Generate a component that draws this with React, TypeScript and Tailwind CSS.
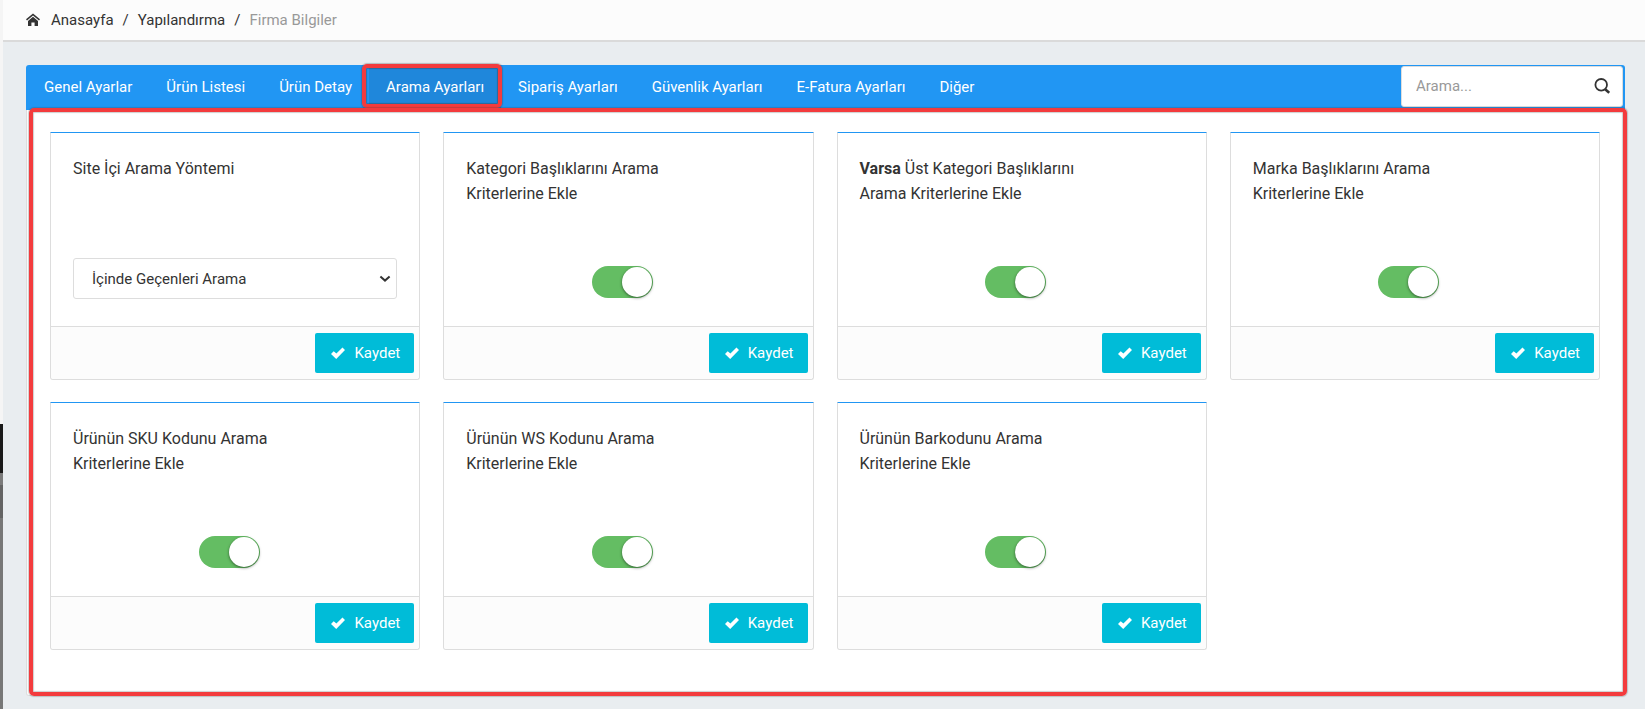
import { useState } from "react";
import type { ReactNode } from "react";

type Setting = {
  id: string;
  title: ReactNode;
  kind: "select" | "toggle";
};

const tabs = [
  "Genel Ayarlar",
  "Ürün Listesi",
  "Ürün Detay",
  "Arama Ayarları",
  "Sipariş Ayarları",
  "Güvenlik Ayarları",
  "E-Fatura Ayarları",
  "Diğer",
];

const settings: Setting[] = [
  { id: "method", title: "Site İçi Arama Yöntemi", kind: "select" },
  { id: "category", title: "Kategori Başlıklarını Arama Kriterlerine Ekle", kind: "toggle" },
  {
    id: "parent-category",
    title: (
      <>
        <b className="font-bold">Varsa</b> Üst Kategori Başlıklarını Arama Kriterlerine Ekle
      </>
    ),
    kind: "toggle",
  },
  { id: "brand", title: "Marka Başlıklarını Arama Kriterlerine Ekle", kind: "toggle" },
  { id: "sku", title: "Ürünün SKU Kodunu Arama Kriterlerine Ekle", kind: "toggle" },
  { id: "ws", title: "Ürünün WS Kodunu Arama Kriterlerine Ekle", kind: "toggle" },
  { id: "barcode", title: "Ürünün Barkodunu Arama Kriterlerine Ekle", kind: "toggle" },
];

function HomeIcon() {
  return (
    <svg viewBox="0 0 14 14" className="size-[14px]" fill="currentColor" aria-hidden="true">
      <path d="M7 0.4 0 6.2l1 1.2L7 2.5l6 4.9 1-1.2z" />
      <path d="M7 3.8 2 7.9V13h3.4V9.4h3.2V13H12V7.9z" />
    </svg>
  );
}

function CheckIcon() {
  return (
    <svg viewBox="0 0 14 14" className="size-[14px]" fill="currentColor" aria-hidden="true">
      <path d="M11.5 1.4 5.4 7.6 2.7 5.3 0 8l5.2 5L14 4z" />
    </svg>
  );
}

function SearchIcon() {
  return (
    <svg viewBox="0 0 16 16" className="size-4" fill="none" stroke="currentColor" aria-hidden="true">
      <circle cx="7.2" cy="6.8" r="5.8" strokeWidth="1.8" />
      <path d="m11.2 11.2 4 3.6" strokeWidth="2.6" />
    </svg>
  );
}

function ChevronIcon() {
  return (
    <svg
      viewBox="0 0 12 8"
      className="pointer-events-none absolute right-[6px] h-2 w-3"
      fill="none"
      stroke="currentColor"
      strokeWidth="2"
      aria-hidden="true"
    >
      <path d="m1.4 1.6 4.6 4 4.6-4" />
    </svg>
  );
}

function Toggle({ id }: { id: string }) {
  const [on, setOn] = useState(true);
  return (
    <input
      id={id}
      type="checkbox"
      role="switch"
      checked={on}
      onChange={(e) => setOn(e.target.checked)}
      className="flex h-8 w-[61px] cursor-pointer appearance-none items-center rounded-full bg-[#dfdfdf] px-px before:block before:size-[30px] before:rounded-full before:bg-white before:shadow-[0_1px_3px_rgba(0,0,0,0.5)] checked:justify-end checked:bg-[#64bd63]"
    />
  );
}

function SettingCard({ setting }: { setting: Setting }) {
  return (
    <section className="flex flex-col rounded-b-[3px] border border-[#ddd] border-t-[#2196f3] bg-white">
      <div className="flex h-[193px] flex-col justify-between px-[22px] pt-[23px] pb-[27px]">
        <label htmlFor={setting.id} className="w-3/4 text-base leading-[25px]">
          {setting.title}
        </label>
        {setting.kind === "select" ? (
          <div className="relative flex items-center">
            <select
              id={setting.id}
              className="h-[41px] w-full appearance-none rounded-[3px] border border-[#ddd] bg-white px-[18px] text-[15px]"
            >
              <option>İçinde Geçenleri Arama</option>
            </select>
            <ChevronIcon />
          </div>
        ) : (
          <div className="flex justify-center pr-3 pb-px">
            <Toggle id={setting.id} />
          </div>
        )}
      </div>
      <div className="flex justify-end rounded-b-[3px] border-t border-[#ddd] bg-[#fcfcfc] px-[5px] py-[6px]">
        <button
          type="button"
          className="flex h-10 items-center gap-[9px] rounded-[2px] bg-[#00bcd8] pr-[14px] pl-4 text-[15px] text-white"
        >
          <CheckIcon />
          Kaydet
        </button>
      </div>
    </section>
  );
}

export default function App() {
  return (
    <div className="flex min-h-screen bg-[#e9edf0] font-['Roboto',sans-serif] text-[15px] leading-5 text-[#333]">
      <div className="flex w-[3px] shrink-0 flex-col bg-[#777]" aria-hidden="true">
        <div className="h-[424px] bg-[#f5f5f5]" />
        <div className="h-[49px] bg-[#191919]" />
        <div className="h-3 bg-[#7b7b7b]" />
        <div className="h-[33px] bg-[#646464]" />
      </div>

      <div className="min-w-0 flex-1">
        <header className="border-b-2 border-[#dadada] bg-[#fcfcfc]">
          <nav aria-label="Sayfa yolu" className="flex h-10 items-center gap-[9px] px-[23px]">
            <a href="#" className="flex items-center gap-[11px]">
              <HomeIcon />
              Anasayfa
            </a>
            <span>/</span>
            <a href="#">Yapılandırma</a>
            <span>/</span>
            <span className="text-[#999]">Firma Bilgiler</span>
          </nav>
        </header>

        <main className="pt-[23px] pr-5 pb-3 pl-[23px]">
          <div className="relative">
            <div className="flex h-[45px] items-start justify-between rounded-t-[3px] bg-[#2196f3]">
              <nav aria-label="Ayarlar" className="flex pl-px text-white">
                {tabs.map((tab) => {
                  const active = tab === "Arama Ayarları";
                  return (
                    <a
                      key={tab}
                      href="#"
                      aria-current={active ? "page" : undefined}
                      className={
                        active
                          ? "relative flex h-[43px] items-center bg-[#1f87db] px-[17px]"
                          : "flex h-[43px] items-center px-[17px]"
                      }
                    >
                      {tab}
                      {active && (
                        <span className="pointer-events-none absolute -top-px -right-px bottom-0 -left-[7px] rounded-[5px] border-4 border-[#f33b3d] shadow-[0_0_1px_1px_rgba(60,60,60,0.3),inset_0_0_1px_1px_rgba(60,60,60,0.4)]" />
                      )}
                    </a>
                  );
                })}
              </nav>
              <form
                role="search"
                className="mt-px mr-[2px] flex h-[41px] w-[222px] items-center rounded-[3px] border border-[#ddd] bg-white pr-3 pb-px pl-[14px]"
              >
                <input
                  type="text"
                  aria-label="Arama"
                  placeholder="Arama..."
                  className="min-w-0 flex-1 bg-transparent outline-none placeholder:text-[#999]"
                />
                <button type="button" aria-label="Ara">
                  <SearchIcon />
                </button>
              </form>
            </div>

            <div className="grid grid-cols-4 gap-x-[23px] gap-y-[22px] rounded-b-[3px] border border-t-0 border-[#ddd] bg-white pt-[22px] pr-6 pb-[45px] pl-[23px]">
              {settings.map((setting) => (
                <SettingCard key={setting.id} setting={setting} />
              ))}
            </div>

            <div className="pointer-events-none absolute top-[43px] -right-[2px] bottom-0 left-[3px] rounded-[5px] border-4 border-[#f33b3d] shadow-[0_0_1px_1px_rgba(60,60,60,0.25),inset_0_0_1px_1px_rgba(60,60,60,0.25)]" />
          </div>
        </main>
      </div>
    </div>
  );
}
